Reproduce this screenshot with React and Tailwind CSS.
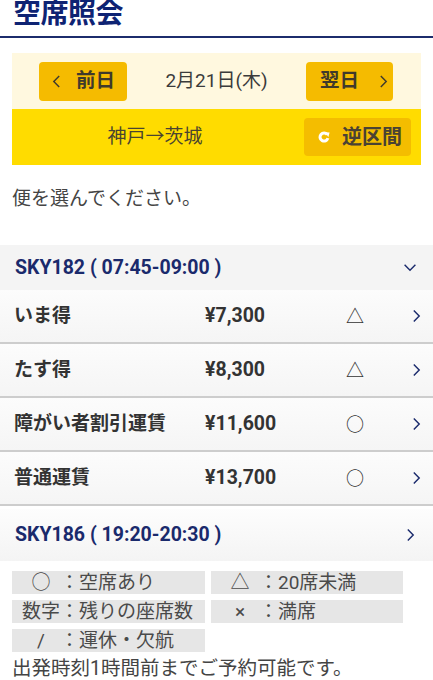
import React from "react";

const Chevron = ({ dir = "right", className = "" }) => {
  const pts = {
    right: "2,1 8,7 2,13",
    left: "8,1 2,7 8,13",
    down: "1,2 7,8 13,2",
  }[dir];
  const box = dir === "down" ? "0 0 14 10" : "0 0 10 14";
  return (
    <svg viewBox={box} className={className} fill="none" stroke="currentColor" strokeWidth="1.6" strokeLinejoin="miter">
      <polyline points={pts} />
    </svg>
  );
};

const ReverseIcon = () => (
  <svg viewBox="0 0 12 12" className="w-[12px] h-[12px]">
    <path d="M9.2 3.6 A4 4 0 1 0 9.9 7.2" fill="none" stroke="#fff" strokeWidth="3" />
    <polygon points="6.8,1.2 11.6,1.6 10.4,6" fill="#fff" />
  </svg>
);

const fares = [
  { name: "いま得", price: "¥7,300", seat: "△" },
  { name: "たす得", price: "¥8,300", seat: "△" },
  { name: "障がい者割引運賃", price: "¥11,600", seat: "○" },
  { name: "普通運賃", price: "¥13,700", seat: "○" },
];

const legend = [
  ["○", "空席あり"],
  ["△", "20席未満"],
  ["数字", "残りの座席数"],
  ["×", "満席"],
  ["/", "運休・欠航"],
];

export default function App() {
  return (
    <div className="w-[433px] h-[680px] overflow-hidden bg-white font-[family-name:Roboto,'Noto_Sans_CJK_JP',sans-serif] text-[#444]">
      {/* title */}
      <div className="h-[38px] flex items-end pb-[8px] pl-[13px] border-b-2 border-[#1c2c6c]">
        <h1 className="text-[28px] leading-[28px] font-bold text-[#0e2373] tracking-[-0.5px]">空席照会</h1>
      </div>

      {/* date / route box */}
      <div className="mx-[12px] mt-[15px]">
        <div className="h-[56px] bg-[#fff8df] flex items-center justify-between pl-[27px] pr-[28px]">
          <button className="w-[88px] h-[39px] rounded-[4px] bg-[#f5bb00] flex items-center pl-[13px] text-[#3f3a2c]">
            <Chevron dir="left" className="w-[9px] h-[13px]" />
            <span className="ml-[15px] text-[19.5px] font-bold">前日</span>
          </button>
          <span className="text-[19px] text-[#3b3b3b]">2月21日(木)</span>
          <button className="w-[87px] h-[39px] rounded-[4px] bg-[#f5bb00] flex items-center pl-[14px] text-[#3f3a2c]">
            <span className="text-[19.5px] font-bold">翌日</span>
            <Chevron dir="right" className="ml-[20px] w-[9px] h-[13px]" />
          </button>
        </div>
        <div className="h-[56px] bg-[#ffdc00] flex items-center pr-[10px]">
          <span className="flex-1 text-center text-[19px] text-[#4a4430] pr-[6px]">神戸→茨城</span>
          <button className="w-[107px] h-[38px] rounded-[4px] bg-[#f4bd00] flex items-center pl-[14px]">
            <ReverseIcon />
            <span className="ml-[12px] text-[20px] font-bold text-[#4a4233]">逆区間</span>
          </button>
        </div>
      </div>

      <p className="mt-[20px] pl-[12px] text-[19px] leading-[28px] text-[#444]">便を選んでください。</p>

      {/* flights */}
      <div className="mt-[32px]">
        <div className="h-[45px] bg-[#f4f4f4] flex items-center justify-between pl-[15px] pr-[16px]">
          <span className="text-[19.5px] font-bold text-[#1a2a6c]">SKY182 ( 07:45-09:00 )</span>
          <Chevron dir="down" className="w-[14px] h-[9px] text-[#1a2a6c]" />
        </div>
        {fares.map((f) => (
          <div key={f.name} className="h-[54px] border-b-2 border-[#cdcdcd] bg-gradient-to-b from-[#fcfcfc] to-[#f5f5f5] flex items-center pl-[14px]">
            <span className="w-[191px] text-[19px] font-bold text-[#333]">{f.name}</span>
            <span className="w-[120px] text-[19.5px] font-bold text-[#333]">{f.price}</span>
            <span className="w-[60px] text-center text-[18px] font-medium text-[#333]">{f.seat}</span>
            <span className="flex-1 flex justify-end pr-[12px]">
              <Chevron dir="right" className="w-[9px] h-[14px] text-[#1a2a6c]" />
            </span>
          </div>
        ))}
        <div className="mt-[3px] h-[52px] bg-gradient-to-b from-[#fdfdfd] to-[#f4f4f4] flex items-center justify-between pl-[15px] pr-[18px]">
          <span className="text-[19.5px] font-bold text-[#1a2a6c]">SKY186 ( 19:20-20:30 )</span>
          <Chevron dir="right" className="w-[9px] h-[14px] text-[#1a2a6c]" />
        </div>
      </div>

      {/* legend */}
      <div className="mt-[10px] pl-[12px] grid grid-cols-[193px_192px] gap-x-[6px] gap-y-[6px]">
        {legend.map(([sym, text]) => (
          <div key={text} className="h-[23px] bg-[#e6e6e6] flex items-center pl-[10px] text-[19px] leading-[23px] text-[#4a4a4a]">
            <span className="w-[38px] text-center">{sym}</span>
            <span>：</span>
            <span>{text}</span>
          </div>
        ))}
      </div>

      <p className="mt-[3px] pl-[12px] text-[19.5px] leading-[28px] text-[#444]">出発時刻1時間前までご予約可能です。</p>
    </div>
  );
}
